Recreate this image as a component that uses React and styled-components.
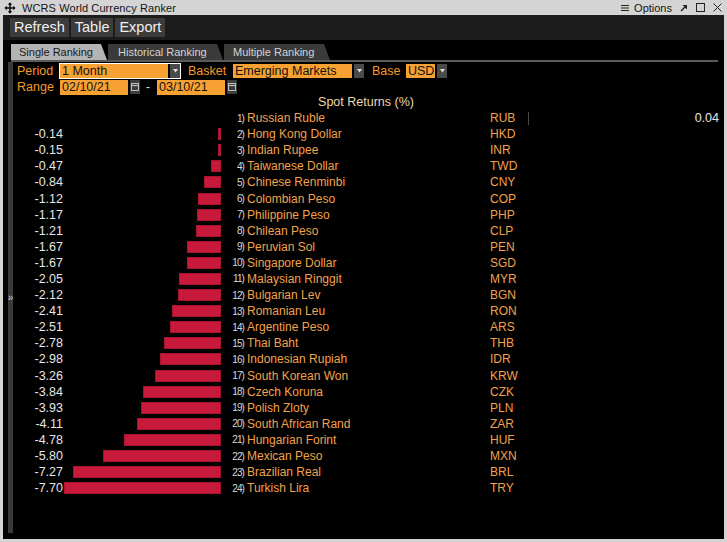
import React from 'react'
import styled, { createGlobalStyle } from 'styled-components'

const GlobalStyle = createGlobalStyle`
  html, body { margin: 0; padding: 0; background: #000; }
  body { font-family: "Liberation Sans", Arial, sans-serif; }
`

const rows = [
  { name: 'Russian Ruble', code: 'RUB', value: 0.04 },
  { name: 'Hong Kong Dollar', code: 'HKD', value: -0.14 },
  { name: 'Indian Rupee', code: 'INR', value: -0.15 },
  { name: 'Taiwanese Dollar', code: 'TWD', value: -0.47 },
  { name: 'Chinese Renminbi', code: 'CNY', value: -0.84 },
  { name: 'Colombian Peso', code: 'COP', value: -1.12 },
  { name: 'Philippine Peso', code: 'PHP', value: -1.17 },
  { name: 'Chilean Peso', code: 'CLP', value: -1.21 },
  { name: 'Peruvian Sol', code: 'PEN', value: -1.67 },
  { name: 'Singapore Dollar', code: 'SGD', value: -1.67 },
  { name: 'Malaysian Ringgit', code: 'MYR', value: -2.05 },
  { name: 'Bulgarian Lev', code: 'BGN', value: -2.12 },
  { name: 'Romanian Leu', code: 'RON', value: -2.41 },
  { name: 'Argentine Peso', code: 'ARS', value: -2.51 },
  { name: 'Thai Baht', code: 'THB', value: -2.78 },
  { name: 'Indonesian Rupiah', code: 'IDR', value: -2.98 },
  { name: 'South Korean Won', code: 'KRW', value: -3.26 },
  { name: 'Czech Koruna', code: 'CZK', value: -3.84 },
  { name: 'Polish Zloty', code: 'PLN', value: -3.93 },
  { name: 'South African Rand', code: 'ZAR', value: -4.11 },
  { name: 'Hungarian Forint', code: 'HUF', value: -4.78 },
  { name: 'Mexican Peso', code: 'MXN', value: -5.80 },
  { name: 'Brazilian Real', code: 'BRL', value: -7.27 },
  { name: 'Turkish Lira', code: 'TRY', value: -7.70 },
]

const PX_PER_PCT = 20.4

const Window = styled.div`
  width: 727px;
  height: 542px;
  box-sizing: border-box;
  background: #d4d4d4;
  padding: 0 3px 3px 3px;
  display: flex;
  flex-direction: column;
  overflow: hidden;
`

const TitleBar = styled.div`
  height: 15px;
  flex: none;
  display: flex;
  align-items: center;
  font-size: 11px;
  color: #141414;
  padding: 0 2px 0 1px;
`

const TitleText = styled.span`
  margin-left: 6px;
  letter-spacing: 0.1px;
`

const TitleControls = styled.div`
  margin-left: auto;
  display: flex;
  align-items: center;
  gap: 8px;
`

const OptionsLabel = styled.span`
  display: flex;
  align-items: center;
  gap: 5px;
`

const Body = styled.div`
  flex: 1;
  background: #000;
  display: flex;
  flex-direction: column;
  min-height: 0;
`

const Toolbar = styled.div`
  height: 25px;
  flex: none;
  background: #1c1c1c;
  display: flex;
  align-items: center;
  gap: 2px;
  padding-left: 7px;
`

const ToolButton = styled.button`
  height: 19px;
  border: none;
  background: #3c3c3c;
  color: #f0f0f0;
  font-family: "Liberation Sans", Arial, sans-serif;
  font-size: 14.5px;
  padding: 0 4px;
  margin: 0;
  line-height: 19px;
`

const Tabs = styled.div`
  display: flex;
  gap: 1px;
  margin-top: 4px;
  padding-left: 8px;
  height: 16px;
  flex: none;
`

const Tab = styled.div`
  width: ${p => p.$w}px;
  box-sizing: border-box;
  padding-left: ${p => p.$pad}px;
  height: 16px;
  line-height: 16px;
  font-size: 11px;
  background: ${p => (p.$active ? '#b4b4b4' : '#3a3a3a')};
  color: ${p => (p.$active ? '#1a1a1a' : '#d4d4d4')};
  clip-path: polygon(0 0, calc(100% - 6px) 0, 100% 100%, 0 100%);
`

const TabLine = styled.div`
  height: 2px;
  flex: none;
  background: #5a5a5a;
  margin: 0 6px 0 8px;
`

const Main = styled.div`
  flex: 1;
  display: flex;
  min-height: 0;
`

const Strip = styled.div`
  width: 5px;
  margin: 0 0 6px 5px;
  background: #3a3a3a;
  display: flex;
  align-items: center;
  justify-content: center;
  color: #cfcfcf;
  font-size: 10px;
  line-height: 1;
`

const Panel = styled.div`
  flex: 1;
  padding: 1px 5px 0 4px;
  display: flex;
  flex-direction: column;
`

const ControlRow = styled.div`
  height: 16px;
  display: flex;
  align-items: center;
  font-size: 12.5px;
`

const Label = styled.span`
  color: #f39a2c;
  width: ${p => p.$w}px;
  margin-left: ${p => p.$ml || 0}px;
  flex: none;
`

const Dropdown = styled.div`
  display: flex;
  width: ${p => p.$w}px;
  height: 16px;
  box-sizing: border-box;
  border: 1px solid ${p => (p.$focus ? '#ffffff' : 'transparent')};
  flex: none;
`

const Field = styled.div`
  flex: ${p => (p.$w ? 'none' : 1)};
  width: ${p => (p.$w ? `${p.$w}px` : 'auto')};
  height: ${p => (p.$w ? 15 : 14)}px;
  background: #f7a133;
  color: #111;
  line-height: 14px;
  padding-left: 2px;
  box-sizing: border-box;
  white-space: nowrap;
  overflow: hidden;
`

const ArrowBox = styled.div`
  width: 10px;
  margin-left: 2px;
  background: #4a4a4a;
  display: flex;
  align-items: center;
  justify-content: center;
`

const CalBox = styled.div`
  width: 10px;
  height: 14px;
  margin-left: 2px;
  display: flex;
  align-items: center;
  justify-content: center;
  background: #3e3e3e;
`

const Dash = styled.span`
  color: #e6e6e6;
  margin: 0 7px 0 6px;
  font-size: 12px;
`

const ChartTitle = styled.div`
  height: 15px;
  line-height: 15px;
  text-align: center;
  font-size: 12.5px;
  color: #ead9ae;
  padding-right: 4px;
`

const Row = styled.div`
  height: 16.1px;
  display: grid;
  grid-template-columns: 46px 158px 24px 245px 38px 1px 1fr;
  align-items: center;
  font-size: 12px;
  white-space: nowrap;
`

const Value = styled.span`
  color: #e6e6e6;
  text-align: right;
  font-size: 12.5px;
`

const BarCell = styled.div`
  display: flex;
  justify-content: flex-end;
  height: 12px;
`

const Bar = styled.div`
  height: 12px;
  background: #c8193a;
  box-shadow: inset 0 0 0 1px #a8142f;
`

const Rank = styled.span`
  color: #d8d8d8;
  text-align: right;
  font-size: 10px;
  letter-spacing: -0.9px;
  padding-right: 1px;
`

const Name = styled.span`
  color: #f2a24c;
  padding-left: 2px;
`

const Code = styled.span`
  color: #f2a24c;
`

const Axis = styled.div`
  width: 1px;
  height: 13px;
  background: ${p => (p.$show ? '#4a4a4a' : 'transparent')};
`

const RightValue = styled.span`
  color: #e6e6e6;
  text-align: right;
  font-size: 12.5px;
`

const MoveIcon = () => (
  <svg width="12" height="12" viewBox="0 0 12 12">
    <path
      d="M6 0.3 L8.3 2.8 H6.8 V5.2 H9.2 V3.7 L11.7 6 L9.2 8.3 V6.8 H6.8 V9.2 H8.3 L6 11.7 L3.7 9.2 H5.2 V6.8 H2.8 V8.3 L0.3 6 L2.8 3.7 V5.2 H5.2 V2.8 H3.7 Z"
      fill="#111"
    />
  </svg>
)

const MenuIcon = () => (
  <svg width="8" height="8" viewBox="0 0 8 8">
    <path d="M0 1.5 H8 M0 4 H8 M0 6.5 H8" stroke="#222" strokeWidth="1" />
  </svg>
)

const PopIcon = () => (
  <svg width="8" height="8" viewBox="0 0 8 8">
    <path d="M1 7 L6.5 1.5" stroke="#222" strokeWidth="1.4" />
    <path d="M2.5 1 H7 V5.5 Z" fill="#222" />
  </svg>
)

const SquareIcon = () => (
  <svg width="9" height="9" viewBox="0 0 9 9">
    <rect x="0.5" y="0.5" width="8" height="8" fill="none" stroke="#222" strokeWidth="1" />
  </svg>
)

const CloseIcon = () => (
  <svg width="9" height="9" viewBox="0 0 9 9">
    <path d="M0.5 0.5 L8.5 8.5 M8.5 0.5 L0.5 8.5" stroke="#222" strokeWidth="1" />
  </svg>
)

const DownTriangle = () => (
  <svg width="5" height="4" viewBox="0 0 5 4">
    <path d="M0 0 H5 L2.5 3.5 Z" fill="#e0e0e0" />
  </svg>
)

const CalendarIcon = () => (
  <svg width="8" height="8" viewBox="0 0 8 8">
    <rect x="0.5" y="0.5" width="7" height="7" fill="none" stroke="#bdbdbd" strokeWidth="1" />
    <path d="M0.5 2.5 H7.5" stroke="#bdbdbd" strokeWidth="1.2" />
  </svg>
)

function Select({ width, focus, children }) {
  return (
    <Dropdown $w={width} $focus={focus}>
      <Field>{children}</Field>
      <ArrowBox><DownTriangle /></ArrowBox>
    </Dropdown>
  )
}

function DateInput({ children }) {
  return (
    <>
      <Field $w={68}>{children}</Field>
      <CalBox><CalendarIcon /></CalBox>
    </>
  )
}

export default function App() {
  return (
    <>
      <GlobalStyle />
      <Window>
        <TitleBar>
          <MoveIcon />
          <TitleText>WCRS World Currency Ranker</TitleText>
          <TitleControls>
            <OptionsLabel><MenuIcon />Options</OptionsLabel>
            <PopIcon />
            <SquareIcon />
            <CloseIcon />
          </TitleControls>
        </TitleBar>
        <Body>
          <Toolbar>
            <ToolButton>Refresh</ToolButton>
            <ToolButton>Table</ToolButton>
            <ToolButton>Export</ToolButton>
          </Toolbar>
          <Tabs>
            <Tab $active $w={96} $pad={8}>Single Ranking</Tab>
            <Tab $w={115} $pad={10}>Historical Ranking</Tab>
            <Tab $w={106} $pad={9}>Multiple Ranking</Tab>
          </Tabs>
          <TabLine />
          <Main>
            <Strip>»</Strip>
            <Panel>
              <ControlRow>
                <Label $w={42}>Period</Label>
                <Select width={122} focus>1 Month</Select>
                <Label $w={44} $ml={7}>Basket</Label>
                <Select width={133}>Emerging Markets</Select>
                <Label $w={33} $ml={7}>Base</Label>
                <Select width={43}>USD</Select>
              </ControlRow>
              <ControlRow>
                <Label $w={43}>Range</Label>
                <DateInput>02/10/21</DateInput>
                <Dash>-</Dash>
                <DateInput>03/10/21</DateInput>
              </ControlRow>
              <ChartTitle>Spot Returns (%)</ChartTitle>
              {rows.map((r, i) => (
                <Row key={r.code}>
                  <Value>{r.value < 0 ? r.value.toFixed(2) : ''}</Value>
                  <BarCell>
                    {r.value < 0 && (
                      <Bar style={{ width: `${Math.abs(r.value) * PX_PER_PCT}px` }} />
                    )}
                  </BarCell>
                  <Rank>{i + 1})</Rank>
                  <Name>{r.name}</Name>
                  <Code>{r.code}</Code>
                  <Axis $show={r.value > 0} />
                  <RightValue>{r.value > 0 ? r.value.toFixed(2) : ''}</RightValue>
                </Row>
              ))}
            </Panel>
          </Main>
        </Body>
      </Window>
    </>
  )
}
